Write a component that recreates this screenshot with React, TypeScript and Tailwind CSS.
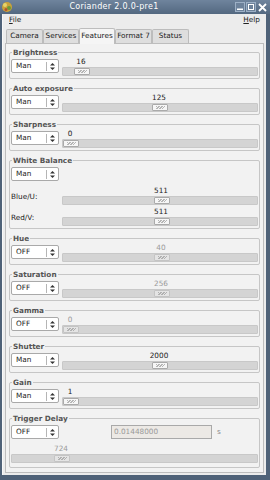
import React from "react";

const ui = "font-['DejaVu_Sans',sans-serif]";

function Combo({ value }: { value: string }) {
  return (
    <div className="w-[48px] h-[14px] shrink-0 bg-white border border-[#a9a9a9] rounded-[2px] flex items-center">
      <span className="flex-1 pl-[4px] text-[#222] leading-none">{value}</span>
      <span className="h-[9px] border-l border-[#b5b5b5]" />
      <svg width="9" height="9" viewBox="0 0 9 9" className="mx-[1px]">
        <path d="M2 3.5 L4.5 1 L7 3.5 Z" fill="#333" />
        <path d="M2 5.5 L4.5 8 L7 5.5 Z" fill="#333" />
      </svg>
    </div>
  );
}

function Slider({ value, pos, disabled }: { value: string; pos: number; disabled?: boolean }) {
  return (
    <div className="flex-1 flex flex-col">
      <div className="h-[9px] flex">
        <div
          className={`w-[16px] leading-[8px] whitespace-nowrap flex justify-center ${disabled ? "text-[#9a9a9a]" : "text-[#222]"}`}
          style={{ marginLeft: pos }}
        >
          {value}
        </div>
      </div>
      <div className="relative h-[9px] bg-[#d4d4d4] border border-[#c8c8c8] rounded-[1px]">
        <div
          className={`absolute top-[0px] h-[7px] w-[16px] border rounded-[1px] flex items-center justify-center ${disabled ? "bg-[#e4e4e4] border-[#c4c4c4]" : "bg-[#f6f6f6] border-[#aaaaaa]"}`}
          style={{ left: pos }}
        >
          <div className="w-[9px] h-[3px] bg-[repeating-linear-gradient(135deg,#9a9a9a_0px,#9a9a9a_1px,transparent_1px,transparent_2px)] opacity-70" />
        </div>
      </div>
    </div>
  );
}

function Frame({ title, children }: { title: string; children: React.ReactNode }) {
  return (
    <div className="shrink-0 border border-[#c6c6c6] rounded-[2px] px-[1px] pb-[2px]">
      <div className="-mt-[5px] ml-[1px] w-fit px-[1px] bg-[#f2f2f2] font-bold text-[#555] leading-[9px]">
        {title}
      </div>
      <div className="pt-[1px]">{children}</div>
    </div>
  );
}

function SimpleFrame({ title, mode, value, pos, disabled }: { title: string; mode: string; value: string; pos: number; disabled?: boolean }) {
  return (
    <Frame title={title}>
      <div className="flex items-start gap-[3px]">
        <div className="pt-[1px]">
          <Combo value={mode} />
        </div>
        <Slider value={value} pos={pos} disabled={disabled} />
      </div>
    </Frame>
  );
}

const tabs = ["Camera", "Services", "Features", "Format 7", "Status"];
const tabW = [37, 36, 36, 37, 37];

export default function App() {
  return (
    <div className={`${ui} text-[7.3px] w-[270px] h-[480px] bg-[#4f6278] flex flex-col overflow-hidden`}>
      {/* title bar */}
      <div className="h-[14px] shrink-0 flex items-center bg-[linear-gradient(#6f849d,#536880)]">
        <svg width="12" height="12" viewBox="0 0 12 12" className="ml-[1px]">
          <circle cx="6" cy="6" r="5" fill="#c9a23a" />
          <circle cx="4" cy="4" r="2" fill="#e7d36a" />
          <circle cx="8" cy="7" r="2" fill="#6a9a3a" />
          <circle cx="5" cy="8.5" r="1.5" fill="#b5522e" />
        </svg>
        <div className="flex-1 text-center text-white text-[8px] tracking-[0.3px] pr-[20px]">Coriander 2.0.0-pre1</div>
        <div className="flex items-center gap-[1px] mr-[2px]">
          <svg width="10" height="10" viewBox="0 0 10 10">
            <rect x="0.5" y="0.5" width="9" height="9" fill="#6d829b" stroke="#9db0c6" />
            <rect x="2" y="6.5" width="6" height="1.5" fill="#fff" />
          </svg>
          <svg width="10" height="10" viewBox="0 0 10 10">
            <rect x="0.5" y="0.5" width="9" height="9" fill="#6d829b" stroke="#9db0c6" />
            <rect x="2.5" y="2.5" width="5" height="5" fill="none" stroke="#fff" />
          </svg>
          <svg width="11" height="11" viewBox="0 0 11 11">
            <path d="M2 2 L9 9 M9 2 L2 9" stroke="#fff" strokeWidth="1.8" />
          </svg>
        </div>
      </div>

      <div className="flex-1 flex flex-col bg-[#ececec] ml-[2px] mr-[4px] mb-[5px] border-l border-[#f8f8f8]">
        {/* menu */}
        <div className="h-[13px] shrink-0 flex items-center justify-between px-[6px] text-[#222]">
          <span><span className="underline">F</span>ile</span>
          <span><span className="underline">H</span>elp</span>
        </div>

        {/* tabs */}
        <div className="h-[16px] shrink-0 flex items-end pl-[3px]">
          {tabs.map((t, i) => {
            const active = t === "Features";
            return (
              <div
                key={t}
                className={`flex items-center justify-center border border-b-0 rounded-t-[2px] text-[#222] ${
                  active ? "h-[16px] bg-[#f5f5f5] border-[#bdbdbd] relative top-[1px]" : "h-[14px] bg-[#dedede] border-[#bcbcbc]"
                }`}
                style={{ width: tabW[i] }}
              >
                {t}
              </div>
            );
          })}
        </div>

        {/* notebook page */}
        <div className="flex-1 mx-[2px] mb-[2px] bg-[#f2f2f2] border border-[#bdbdbd] px-[3px] pt-[8px] flex flex-col gap-[9px]">
          <SimpleFrame title="Brightness" mode="Man" value="16" pos={11} />
          <SimpleFrame title="Auto exposure" mode="Man" value="125" pos={89} />
          <SimpleFrame title="Sharpness" mode="Man" value="0" pos={0} />
          <Frame title="White Balance">
            <div className="pt-[1px]">
              <Combo value="Man" />
            </div>
            <div className="flex items-center mt-[6px]">
              <span className="w-[51px] shrink-0 text-[#222] pt-[2px]">Blue/U:</span>
              <Slider value="511" pos={91} />
            </div>
            <div className="flex items-center mt-[3px]">
              <span className="w-[51px] shrink-0 text-[#222] pt-[2px]">Red/V:</span>
              <Slider value="511" pos={91} />
            </div>
          </Frame>
          <SimpleFrame title="Hue" mode="OFF" value="40" pos={91} disabled />
          <SimpleFrame title="Saturation" mode="OFF" value="256" pos={91} disabled />
          <SimpleFrame title="Gamma" mode="OFF" value="0" pos={0} disabled />
          <SimpleFrame title="Shutter" mode="Man" value="2000" pos={89} />
          <SimpleFrame title="Gain" mode="Man" value="1" pos={0} />
          <Frame title="Trigger Delay">
            <div className="flex items-center pt-[1px]">
              <Combo value="OFF" />
              <div className="ml-[52px] w-[101px] h-[14px] bg-[#ece9e5] border border-[#a9a9a9] flex items-center pl-[2px] text-[#999]">
                0.01448000
              </div>
              <span className="ml-[5px] text-[#888]">s</span>
            </div>
            <div className="mt-[6px] mb-[2px]">
              <Slider value="724" pos={42} disabled />
            </div>
          </Frame>
        </div>
      </div>
    </div>
  );
}
